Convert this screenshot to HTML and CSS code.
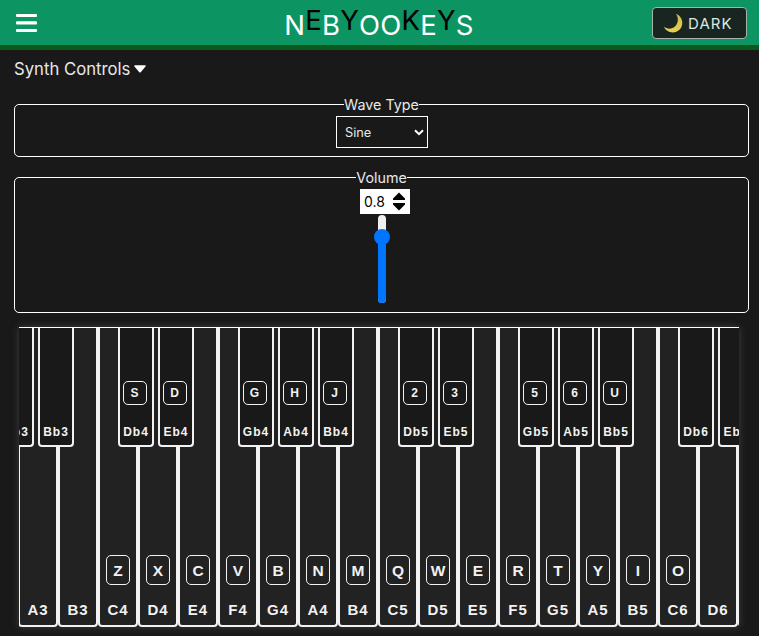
FILE: index.html
```html
<!DOCTYPE html>
<html lang="en">
<head>
<meta charset="utf-8">
<title>Nebyookeys</title>
<link rel="stylesheet" href="styles.css">
</head>
<body>
<div class="app">
  <header class="header">
    <button class="menu" aria-label="Menu">
      <svg width="21" height="18" viewBox="0 0 21 18"><g fill="#fff"><rect width="21" height="3" rx="1"/><rect y="7.3" width="21" height="3.2" rx="1"/><rect y="15" width="21" height="3" rx="1"/></g></svg>
    </button>
    <h1 class="logo"><span>N</span><span class="up">E</span><span>B</span><span class="up">Y</span><span>O</span><span>O</span><span class="up">K</span><span>E</span><span class="up">Y</span><span>S</span></h1>
    <button class="theme">
      <svg width="20" height="20" viewBox="0 0 20 20"><defs><linearGradient id="moon" x1="0" y1="0" x2="0" y2="1"><stop offset="0" stop-color="#c9b84a"/><stop offset="1" stop-color="#e9cf52"/></linearGradient></defs><path d="M12.9 .8C17 2.400 19.400 6 19.300 10C19.200 15.500 15 19.400 9.800 19.400C5.800 19.400 2.300 17.200 .8 13.500C3.600 16 7.800 16.400 11 14.300C15.400 11.300 16 5 12.900 .8Z" fill="url(#moon)"/></svg>
      <span>DARK</span>
    </button>
  </header>
  <main class="main">
    <div class="summary">Synth Controls <svg width="12" height="8" viewBox="0 0 12 8"><path d="M1 .2H11Q12.300 .4 11.500 1.600L6.700 7.200Q6 7.900 5.300 7.200L.5 1.600Q-.3 .4 1 .2Z" fill="#fff"/></svg></div>
    <fieldset class="panel wave">
      <legend>Wave Type</legend>
      <div class="select"><span>Sine</span><svg width="10" height="7" viewBox="0 0 10 7"><path d="M1 1.200L5 5.200L9 1.200" fill="none" stroke="#fff" stroke-width="2"/></svg></div>
    </fieldset>
    <fieldset class="panel volume">
      <legend>Volume</legend>
      <div class="number"><span>0.8</span><svg width="12" height="19" viewBox="0 0 12 19"><path d="M6 .5L12 6.500V8H0V6.500ZM0 11H12V12.500L6 18.500L0 12.500Z" fill="#000"/></svg></div>
      <div class="slider"><div class="fill"></div><div class="thumb"></div></div>
    </fieldset>
    <div class="keyboard"><div class="keys" id="keys"></div></div>
  </main>
</div>
<script src="keys.js"></script>
</body>
</html>
```
FILE: styles.css
```css
* { box-sizing: border-box; }
html { background: #fff; }
body { margin: 0; font-family: Inter, "Liberation Sans", sans-serif; color: #e8e8e8; overflow: hidden; }
button { font: inherit; color: inherit; padding: 0; border: 0; background: none; }
svg { display: block; }
.app { width: 759px; height: 636px; background: #191919; overflow: hidden; }
.header { display: grid; grid-template-columns: 1fr auto 1fr; align-items: center; height: 50px; padding: 0 12px 0 16px; background: #0c9463; border-bottom: 5px solid #0b5a19; }
.menu { justify-self: start; }
.logo { display: flex; margin: 5px 0 0 -5px; font-size: 27.500px; line-height: 34px; font-weight: 400; letter-spacing: 0.200px; color: #fff; }
.up { color: #000; margin-top: -5px; height: 34px; }
.theme { justify-self: end; display: flex; align-items: center; gap: 5px; width: 95px; height: 32px; margin-top: 1px; padding-left: 10px; border: 1px solid #a5b5ae; border-radius: 4px; background: #182520; color: #d9e8e4; font-size: 15px; letter-spacing: 1.100px; }
.main { padding: 0 10px 0 14px; }
.summary { display: flex; align-items: center; gap: 4px; height: 38px; font-size: 16.700px; margin-bottom: 8px; }
.panel { display: flex; flex-direction: column; align-items: center; margin: 0; padding: 0; border: 1px solid #fff; border-radius: 5px; }
.panel legend { margin: 0 auto; padding: 0; font-size: 14.300px; height: 17px; line-height: 18px; }
.wave { height: 61px; }
.volume { height: 144px; margin-top: 12px; }
.select { display: flex; align-items: center; justify-content: space-between; width: 92px; height: 32px; margin: 3px 0 0 1px; padding: 0 3px 0 8px; border: 1px solid #fff; font-size: 12.800px; }
.number { display: flex; align-items: center; justify-content: space-between; width: 50px; height: 25px; margin: 3px 0 0 7px; padding: 0 5px 0 4px; background: #fff; color: #000; font-size: 14px; }
.slider { position: relative; width: 8px; height: 88px; margin-top: 1px; border-radius: 4px; background: #efefef; }
.fill { height: 66px; margin-top: 22px; border-radius: 0 0 4px 4px; background: #0075ff; }
.thumb { position: absolute; left: -4px; top: 14px; width: 16px; height: 16px; border-radius: 50%; background: #0075ff; }
.keyboard { width: 720px; height: 300px; margin: 14px 0 0 5px; box-shadow: 0 0 7px #404040; }
.keys { display: flex; width: 720px; height: 300px; overflow: hidden; border-top: 1px solid #fff; background: #191919; font-family: "Liberation Sans", sans-serif; font-weight: 700; letter-spacing: 1px; color: #f2f2f2; }
.white { position: relative; flex: 0 0 40px; height: 299px; border: 2px solid #f2f2f2; border-top: 0; border-radius: 0 0 4px 4px; background: #222; font-size: 15px; display: flex; flex-direction: column; justify-content: flex-end; align-items: center; padding-bottom: 5px; }
.white:first-child { margin-left: -41px; }
.black { position: absolute; z-index: 1; left: 18px; top: 0; width: 36px; height: 119px; border: 2px solid #f2f2f2; border-top: 0; border-radius: 0 0 4px 4px; background: #191919; font-size: 12px; display: flex; flex-direction: column; justify-content: flex-end; align-items: center; padding-bottom: 6px; }
.cap { display: flex; align-items: center; justify-content: center; width: 24px; height: 30px; margin-bottom: 15px; padding-top: 2px; border: 1px solid #f2f2f2; border-radius: 5px; font-size: 15.500px; letter-spacing: 0; }
.black .cap { height: 24px; margin: 0 2px 20px 0; padding: 0 1px 0 0; font-size: 12px; }
.note { line-height: 20px; white-space: nowrap; }
.black .note { line-height: 14px; }
```
FILE: keys.js
```js
// [note, keyboard shortcut, sharp/flat above it, its shortcut]
const keys = [
  ["G3", "", "Ab3", ""], ["A3", "", "Bb3", ""], ["B3", ""],
  ["C4", "Z", "Db4", "S"], ["D4", "X", "Eb4", "D"], ["E4", "C"],
  ["F4", "V", "Gb4", "G"], ["G4", "B", "Ab4", "H"], ["A4", "N", "Bb4", "J"], ["B4", "M"],
  ["C5", "Q", "Db5", "2"], ["D5", "W", "Eb5", "3"], ["E5", "E"],
  ["F5", "R", "Gb5", "5"], ["G5", "T", "Ab5", "6"], ["A5", "Y", "Bb5", "U"], ["B5", "I"],
  ["C6", "O", "Db6", ""], ["D6", "", "Eb6", ""], ["E6", ""]
];
const label = (note, cap) =>
  (cap ? `<span class="cap">${cap}</span>` : "") + `<span class="note">${note}</span>`;
document.getElementById("keys").innerHTML = keys.map(([note, cap, flat, flatCap]) =>
  `<div class="white">${label(note, cap)}${flat ? `<div class="black">${label(flat, flatCap)}</div>` : ""}</div>`
).join("");
```
